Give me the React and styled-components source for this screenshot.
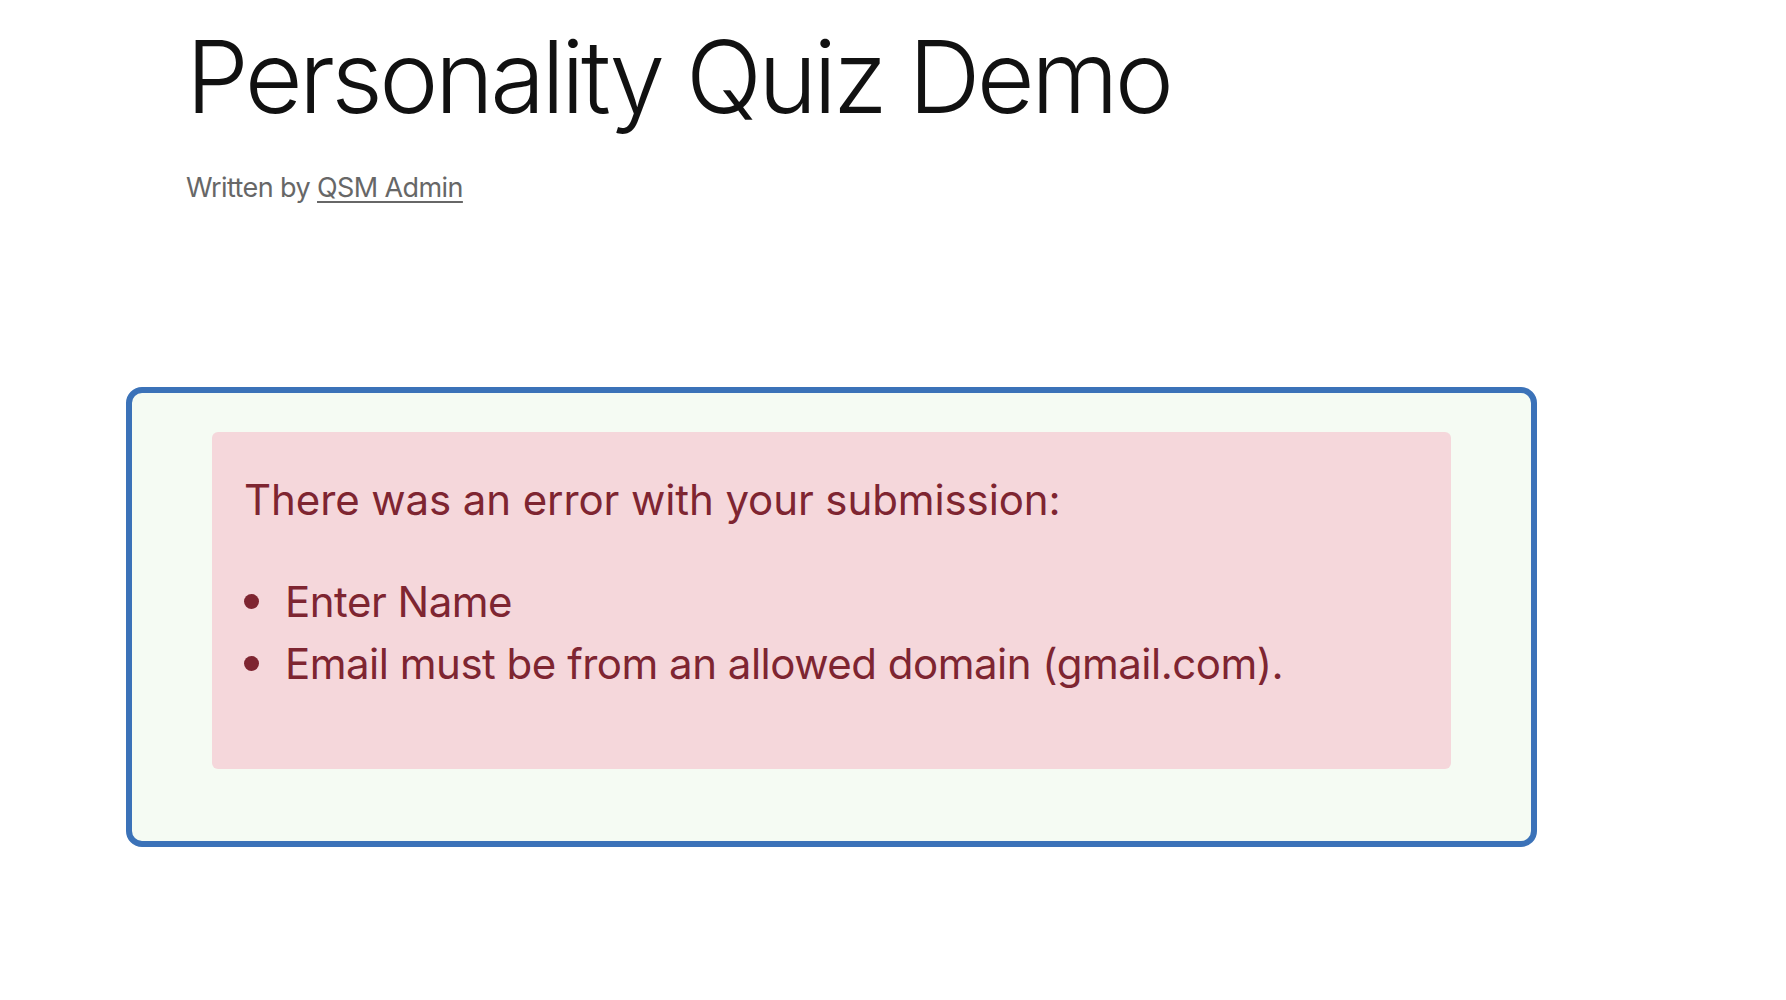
import React from 'react';
import styled, { createGlobalStyle } from 'styled-components';

const GlobalStyle = createGlobalStyle`
    * {
        box-sizing: border-box;
    }
    body {
        margin: 0;
        background: #fff;
        font-family: Inter, 'Noto Sans', sans-serif;
    }
`

const Page = styled.div`
    padding-bottom: 120px;
`

const Header = styled.header`
    padding-left: 186px;
`

const Title = styled.h1`
    margin: 0;
    padding-top: 16px;
    font-size: 100px;
    line-height: 122px;
    font-weight: 350;
    letter-spacing: -3.6px;
    color: #111;
`

const Byline = styled.p`
    margin: 30px 0 0;
    font-size: 27px;
    line-height: 1.5;
    color: #676767;
    letter-spacing: -0.6px;

    a {
        color: inherit;
        text-decoration: underline;
        text-underline-offset: 4px;
        text-decoration-thickness: 1.5px;
    }
`

const QuizBox = styled.section`
    margin: 178px 0 0 126px;
    width: 1411px;
    padding: 39px 80px 0;
    border: 6px solid #3b72b8;
    border-radius: 16px;
    background: #f5fbf3;
    display: flex;
    flex-direction: column;
`

const Alert = styled.div`
    margin-bottom: 72px;
    padding: 40px 32px 74px;
    background: #f5d7db;
    border-radius: 6px;
    color: #7e2531;
`

const AlertTitle = styled.p`
    margin: 0;
    font-size: 42px;
    line-height: 56px;
    letter-spacing: -0.1px;
`

const ErrorList = styled.ul`
    list-style: none;
    margin: 43px 0 0;
    padding: 0;
`

const ErrorItem = styled.li`
    display: flex;
    align-items: center;
    gap: 26px;
    font-size: 42px;
    line-height: 62px;
    letter-spacing: -0.5px;

    &::before {
        content: '';
        flex: 0 0 15px;
        height: 15px;
        border-radius: 50%;
        background: currentColor;
    }
`

const errors = [
    'Enter Name',
    'Email must be from an allowed domain (gmail.com).',
]

export default function App() {
    return (
        <Page>
            <GlobalStyle/>
            <Header>
                <Title>Personality Quiz Demo</Title>
                <Byline>Written by <a href="#">QSM Admin</a></Byline>
            </Header>
            <QuizBox>
                <Alert>
                    <AlertTitle>There was an error with your submission:</AlertTitle>
                    <ErrorList>
                        {errors.map((msg) => (
                            <ErrorItem key={msg}>{msg}</ErrorItem>
                        ))}
                    </ErrorList>
                </Alert>
            </QuizBox>
        </Page>
    )
}
